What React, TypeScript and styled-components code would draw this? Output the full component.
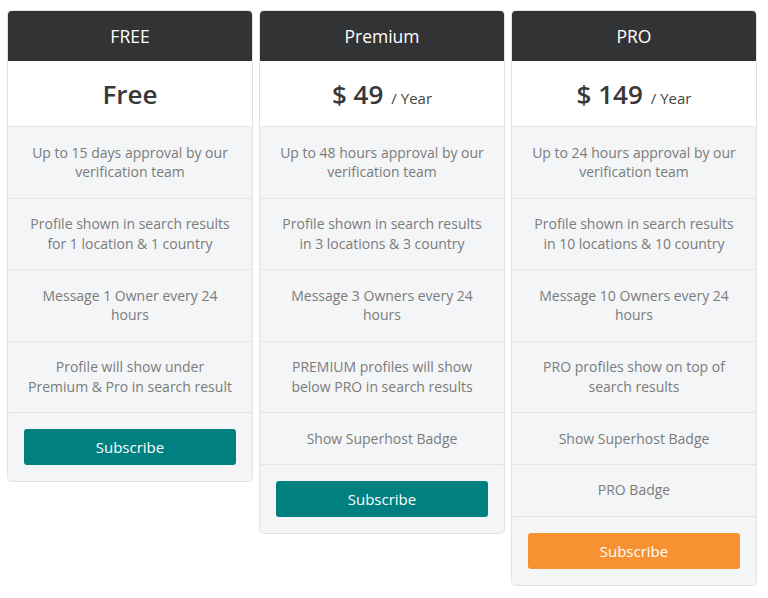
import React from "react";
import styled, { createGlobalStyle } from "styled-components";

const Global = createGlobalStyle`
  html, body { margin: 0; padding: 0; background: #fff; }
  body { font-family: "Open Sans", "Noto Sans", sans-serif; }
  * { box-sizing: border-box; }
`;

const Page = styled.div`
  display: flex;
  align-items: flex-start;
  gap: 6px;
  padding: 10px 11px 0 7px;
`;

const Card = styled.div`
  width: 246.5px;
  border: 1px solid #e2e3e5;
  border-radius: 5px;
  background: #f4f5f7;
  overflow: hidden;
  display: flex;
  flex-direction: column;
`;

const Header = styled.div`
  height: 50px;
  background: #323335;
  color: #fff;
  display: flex;
  align-items: center;
  justify-content: center;
  font-size: 17.5px;
  font-weight: 500;
`;

const PriceBox = styled.div`
  height: 66px;
  background: #fff;
  border-bottom: 1px solid #e4e5e7;
  display: flex;
  align-items: center;
  justify-content: center;
  color: #383838;
`;

const Amount = styled.span`
  font-size: 26px;
  font-weight: 600;
`;

const Period = styled.span`
  font-size: 15px;
  margin-left: 8px;
  margin-top: 8px;
  color: #444;
`;

const Feature = styled.div`
  padding: 15.5px 18px;
  border-bottom: 1px solid #e4e5e7;
  text-align: center;
  font-size: 14px;
  line-height: 19.75px;
  color: #7b7b7b;
`;

const Footer = styled.div`
  padding: 16px 16px;
  border-top: 1px solid #e4e5e7;
  margin-top: -1px;
  border-radius: 5px 5px 0 0;
`;

const Button = styled.button<{ $tone: "teal" | "orange" }>`
  width: 100%;
  height: 36px;
  border: none;
  border-radius: 3px;
  background: ${(p) => (p.$tone === "orange" ? "#f79232" : "#008080")};
  color: #fff;
  font-family: inherit;
  font-size: 15px;
  font-weight: 500;
  cursor: pointer;
`;

type Plan = {
  name: string;
  amount: string;
  period?: string;
  features: string[];
  tone: "teal" | "orange";
};

const plans: Plan[] = [
  {
    name: "FREE",
    amount: "Free",
    features: [
      "Up to 15 days approval by our verification team",
      "Profile shown in search results for 1 location & 1 country",
      "Message 1 Owner every 24 hours",
      "Profile will show under Premium & Pro in search result",
    ],
    tone: "teal",
  },
  {
    name: "Premium",
    amount: "$ 49",
    period: "/ Year",
    features: [
      "Up to 48 hours approval by our verification team",
      "Profile shown in search results in 3 locations & 3 country",
      "Message 3 Owners every 24 hours",
      "PREMIUM profiles will show below PRO in search results",
      "Show Superhost Badge",
    ],
    tone: "teal",
  },
  {
    name: "PRO",
    amount: "$ 149",
    period: "/ Year",
    features: [
      "Up to 24 hours approval by our verification team",
      "Profile shown in search results in 10 locations & 10 country",
      "Message 10 Owners every 24 hours",
      "PRO profiles show on top of search results",
      "Show Superhost Badge",
      "PRO Badge",
    ],
    tone: "orange",
  },
];

export default function App() {
  return (
    <>
      <Global />
      <Page>
        {plans.map((p) => (
          <Card key={p.name}>
            <Header>{p.name}</Header>
            <PriceBox>
              <Amount>{p.amount}</Amount>
              {p.period && <Period>{p.period}</Period>}
            </PriceBox>
            {p.features.map((f) => (
              <Feature key={f}>{f}</Feature>
            ))}
            <Footer>
              <Button $tone={p.tone}>Subscribe</Button>
            </Footer>
          </Card>
        ))}
      </Page>
    </>
  );
}
